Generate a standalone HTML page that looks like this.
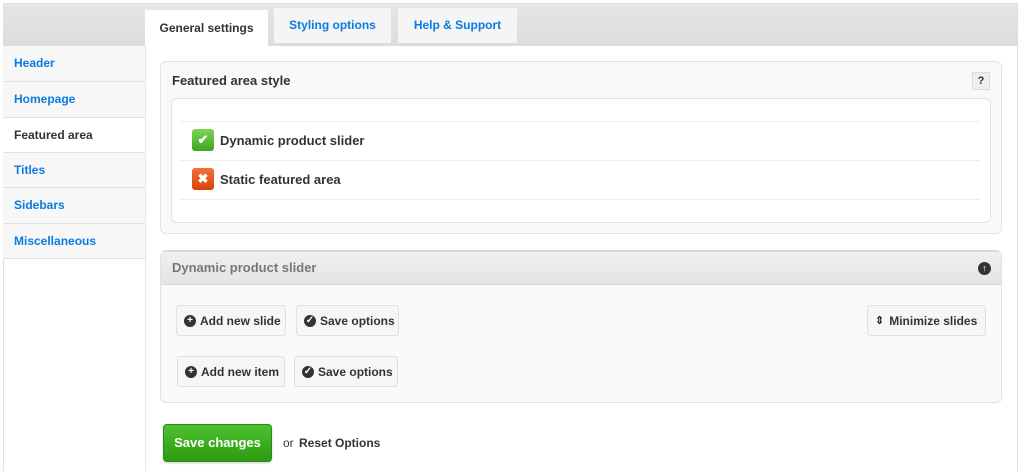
<!DOCTYPE html>
<html><head><style>
*{box-sizing:border-box;margin:0;padding:0}
body{width:1021px;height:471px;background:#fff;font-family:"Liberation Sans",sans-serif;font-size:13px;font-weight:bold;position:relative;overflow:hidden;color:#333}
.abs{position:absolute}
.top{left:3px;top:3px;width:1015px;height:43px;background:linear-gradient(#e6e6e6,#dcdcdc);border-top:1px solid #e0e0e0}
.frame{left:1017px;top:3px;width:1px;height:468px;background:#ddd}
.tab{top:8px;height:35px;background:#f5f5f5;color:#0a7be0;text-align:center;line-height:34px;font-size:12px}
.side{left:3px;width:142px;background:#f7f7f7;border-bottom:1px solid #e2e2e2;color:#0a7be0;padding-left:11px;font-size:12px}
.panel{left:160px;width:842px;border:1px solid #e2e2e2;border-radius:6px;background:#f9f9f9}
.dot{left:181px;width:798px;border-top:1px dotted #ddd;height:0}
.btn{height:31px;border:1px solid #e0e0e0;border-radius:3px;background:#f6f6f6;font-size:12px;padding-left:7px;color:#333;display:flex;align-items:center}
.ci{display:inline-flex;align-items:center;justify-content:center;width:12px;height:12px;border-radius:50%;background:#333;color:#fff;font-size:10px;margin-right:4px}
</style></head><body>
<div class="abs top"></div>
<div class="abs frame"></div>
<div class="abs" style="left:3px;top:46px;width:1px;height:425px;background:#e2e2e2"></div>
<div class="abs tab" style="left:145px;top:10px;width:123px;height:36px;background:#fff;color:#333;line-height:36px">General settings</div>
<div class="abs tab" style="left:274px;width:117px">Styling options</div>
<div class="abs tab" style="left:398px;width:119px">Help &amp; Support</div>

<div class="abs side" style="top:46px;height:36px;line-height:35px">Header</div>
<div class="abs side" style="top:82px;height:36px;line-height:35px">Homepage</div>
<div class="abs side" style="top:118px;height:35px;line-height:34px;background:#fff;color:#333">Featured area</div>
<div class="abs side" style="top:153px;height:35px;line-height:34px">Titles</div>
<div class="abs side" style="top:188px;height:36px;line-height:35px">Sidebars</div>
<div class="abs side" style="top:224px;height:35px;line-height:34px">Miscellaneous</div>
<div class="abs" style="left:145px;top:46px;width:1px;height:425px;background:#e8e8e8"></div>

<div class="abs panel" style="top:61px;height:173px"></div>
<div class="abs" style="left:172px;top:73px">Featured area style</div>
<div class="abs" style="left:972px;top:72px;width:18px;height:18px;background:#eee;border:1px solid #ddd;font-size:11px;text-align:center;line-height:16px">?</div>
<div class="abs" style="left:171px;top:98px;width:820px;height:125px;background:#fff;border:1px solid #e2e2e2;border-radius:6px"></div>
<div class="abs dot" style="top:121px"></div>
<div class="abs dot" style="top:160px"></div>
<div class="abs dot" style="top:199px"></div>
<div class="abs" style="left:192px;top:129px;width:22px;height:22px;border-radius:3px;background:linear-gradient(#7ed35a,#3ea61f);color:#fff;text-align:center;line-height:22px;font-size:13px">✔</div>
<div class="abs" style="left:220px;top:133px">Dynamic product slider</div>
<div class="abs" style="left:192px;top:168px;width:22px;height:22px;border-radius:3px;background:linear-gradient(#f2713d,#d94208);color:#fff;text-align:center;line-height:22px;font-size:13px">✖</div>
<div class="abs" style="left:220px;top:172px">Static featured area</div>

<div class="abs panel" style="top:250px;height:153px;background:#fafafa;border-top:3px solid #d8d8d8"></div>
<div class="abs" style="left:161px;top:252px;width:840px;height:33px;background:linear-gradient(#f0f0f0,#e4e4e4);border-bottom:1px solid #d8d8d8;color:#777;padding:8px 0 0 11px">Dynamic product slider</div>
<div class="abs" style="left:978px;top:262px;width:13px;height:13px;border-radius:50%;background:#333;color:#fff;font-size:9px;text-align:center;line-height:13px">↑</div>

<div class="abs btn" style="left:176px;top:305px;width:110px"><span class="ci">+</span>Add new slide</div>
<div class="abs btn" style="left:296px;top:305px;width:103px"><span class="ci">✓</span>Save options</div>
<div class="abs btn" style="left:177px;top:356px;width:108px"><span class="ci">+</span>Add new item</div>
<div class="abs btn" style="left:294px;top:356px;width:104px"><span class="ci">✓</span>Save options</div>
<div class="abs btn" style="left:867px;top:305px;width:119px"><span style="font-size:11px;margin-right:5px">⇕</span>Minimize slides</div>

<div class="abs" style="left:163px;top:424px;width:109px;height:38px;border-radius:4px;background:linear-gradient(#4fc231,#2c9a10);border:1px solid #2a8c12;color:#fff;text-align:center;line-height:36px;box-shadow:0 1px 2px rgba(0,0,0,.2)">Save changes</div>
<div class="abs" style="left:283px;top:436px;font-weight:normal;font-size:12px">or</div>
<div class="abs" style="left:299px;top:436px;font-size:12px">Reset Options</div>
</body></html>
